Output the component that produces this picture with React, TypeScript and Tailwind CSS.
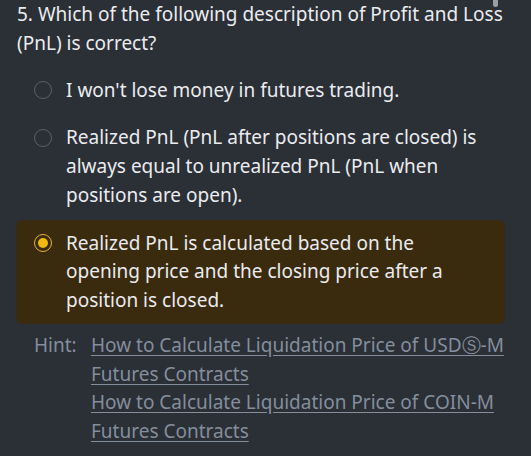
import React from "react";

const options = [
  "I won't lose money in futures trading.",
  "Realized PnL (PnL after positions are closed) is always equal to unrealized PnL (PnL when positions are open).",
  "Realized PnL is calculated based on the opening price and the closing price after a position is closed.",
];

function Radio({ checked }: { checked: boolean }) {
  return (
    <div className="h-[28.5px] flex items-center shrink-0">
      {checked ? (
        <div className="w-[18px] h-[18px] rounded-full border-[1.5px] border-[#e6b33b] flex items-center justify-center">
          <div className="w-[10px] h-[10px] rounded-full bg-[#f0b90b]" />
        </div>
      ) : (
        <div className="w-[18px] h-[18px] rounded-full border-[1.5px] border-[#5a606b]" />
      )}
    </div>
  );
}

export default function App() {
  return (
    <div
      className="relative w-[531px] h-[456px] overflow-hidden bg-[#2b2f36] text-[#eaecef] pl-[16px] pr-[26px] text-[19px] leading-[28.75px]"
      style={{ fontFamily: '"Noto Sans", "Open Sans", sans-serif' }}
    >
      <div className="absolute right-[33px] top-0 w-[5px] h-[7px] rounded-b-full bg-[#9a9ea6]" />
      <div className="pl-[1px]">
        5. Which of the following description of Profit and Loss (PnL) is correct?
      </div>
      <div className="mt-[9px] flex flex-col gap-[1px]">
        {options.map((o, i) => {
          const checked = i === 2;
          return (
            <div
              key={i}
              className={
                checked
                  ? "flex gap-[14px] px-[18px] py-[9px] rounded-[6px] bg-[#3a2a0e]"
                  : "flex gap-[14px] px-[18px] py-[9px] rounded-[6px]"
              }
            >
              <Radio checked={checked} />
              <div>{o}</div>
            </div>
          );
        })}
      </div>
      <div className="mt-[7px] pl-[18px] flex text-[#848e9c] text-[19px] leading-[28.75px]">
        <div className="w-[57px] shrink-0">Hint:</div>
        <div className="flex flex-col">
          <a className="underline underline-offset-[3px]">
            How to Calculate Liquidation Price of USDⓈ-M Futures Contracts
          </a>
          <a className="underline underline-offset-[3px]">
            How to Calculate Liquidation Price of COIN-M Futures Contracts
          </a>
        </div>
      </div>
    </div>
  );
}
